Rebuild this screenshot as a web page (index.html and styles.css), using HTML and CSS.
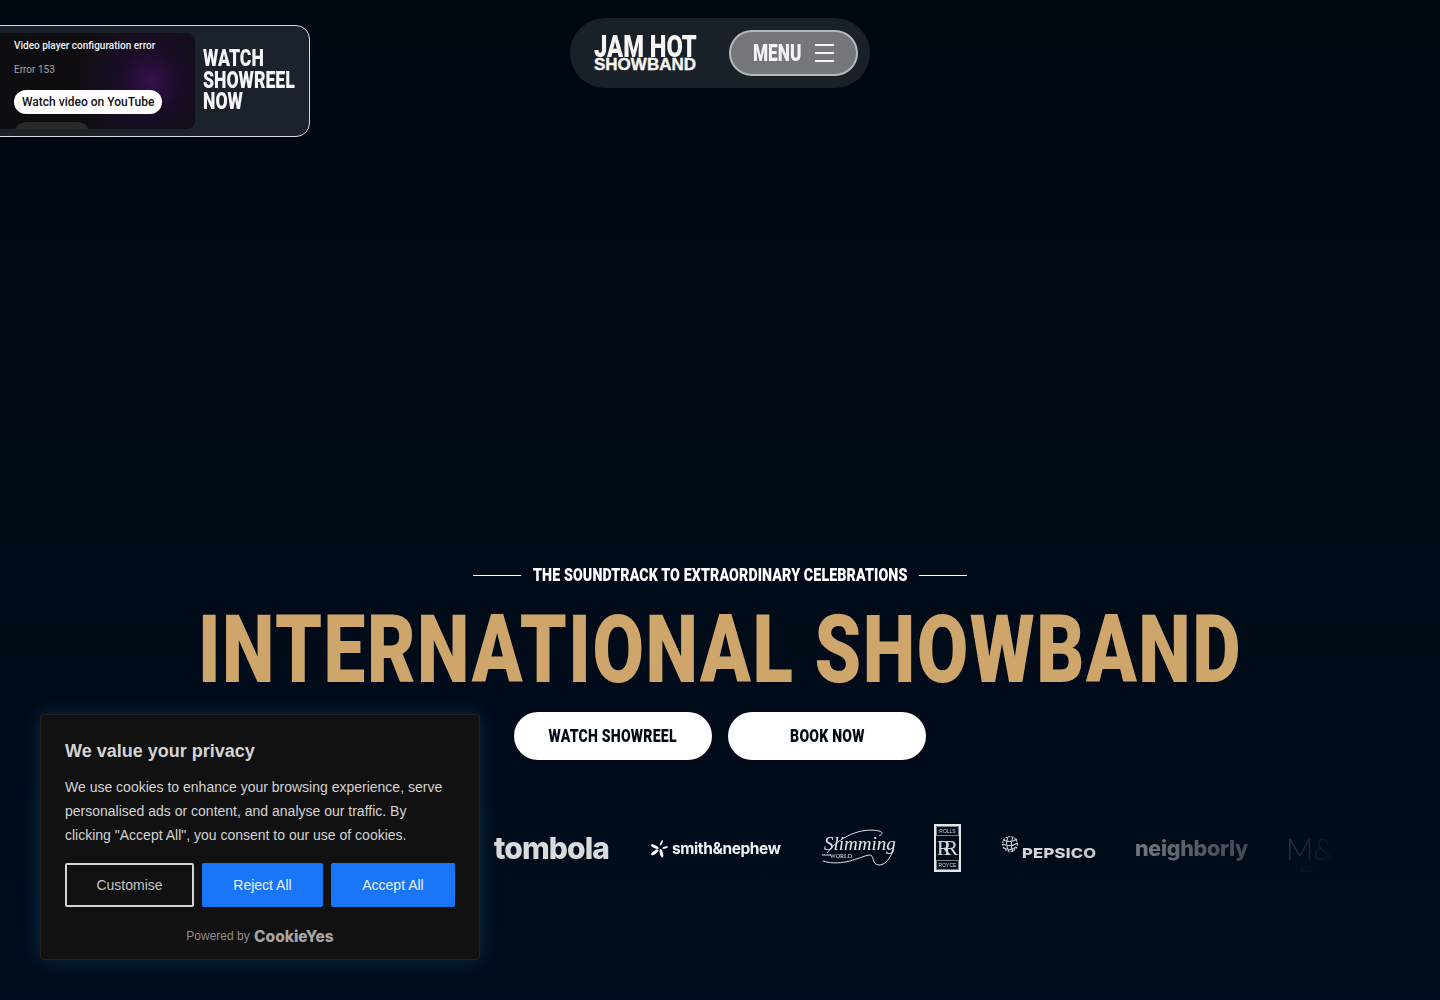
FILE: index.html
```html
<!DOCTYPE html>
<html lang="en">
<head>
  <meta charset="UTF-8">
  <title>Jam Hot Showband</title>
  <link rel="stylesheet" href="styles.css">
</head>
<body>

  <!-- Showreel popup -->
  <div class="reel-card">
    <div class="reel-video">
      <p class="reel-title">Video player configuration error</p>
      <p class="reel-code">Error 153</p>
      <span class="reel-link">Watch video on YouTube</span>
      <span class="reel-stub"></span>
    </div>
    <div class="reel-label">WATCH<br>SHOWREEL<br>NOW</div>
  </div>

  <header class="nav-wrap">
    <nav class="nav-pill">
      <div class="brand">
        <span class="brand-top">JAM HOT</span>
        <span class="brand-sub">SHOWBAND</span>
      </div>
      <button class="menu-btn">
        <span class="menu-text">MENU</span>
        <span class="burger"><i></i><i></i><i></i></span>
      </button>
    </nav>
  </header>

  <main class="hero">
    <div class="tagline">
      <span class="tagline-rule"></span>
      <span class="tagline-text">THE SOUNDTRACK TO EXTRAORDINARY CELEBRATIONS</span>
      <span class="tagline-rule"></span>
    </div>
    <h1 class="headline">INTERNATIONAL SHOWBAND</h1>
    <div class="cta-row">
      <a class="cta"><span>WATCH SHOWREEL</span></a>
      <a class="cta"><span>BOOK NOW</span></a>
    </div>
    <div class="logo-row">
      <span class="logo-tombola">tombola</span>
      <span class="logo-smith">
        <svg viewBox="0 0 20 20" width="19" height="19" fill="#fff">
          <ellipse cx="5" cy="8" rx="4.5" ry="1.6" transform="rotate(25 5 8)"/>
          <ellipse cx="5" cy="14" rx="4.5" ry="1.8" transform="rotate(-35 5 14)"/>
          <ellipse cx="12" cy="15" rx="1.6" ry="4.5" transform="rotate(-15 12 15)"/>
          <ellipse cx="16" cy="9" rx="3" ry="1.1" transform="rotate(-15 16 9)"/>
          <ellipse cx="12" cy="4" rx="1" ry="3" transform="rotate(25 12 4)"/>
        </svg>
        <span>smith&amp;nephew</span>
      </span>
      <span class="logo-slimming">
        <svg class="swoosh" viewBox="0 0 74 38" width="74" height="38" fill="none" stroke="#dfe3e6" stroke-width="1"><path d="M6 24C18 8 40 -2 58 2c4 1 4 3 0 5"/><path d="M1 26H10"/><path d="M2 32C22 38 38 28 48 26c6-1 2 10 10 10s12-10 14-14"/></svg>
        <span class="slimming-text">Slimming</span>
        <span class="slimming-sub">WORLD</span>
      </span>
      <span class="logo-rr">
        <span class="rr-small">ROLLS</span>
        <span class="rr-mark">RR</span>
        <span class="rr-small">ROYCE</span>
      </span>
      <span class="logo-pepsico">
        <svg viewBox="0 0 18 18" width="18" height="18" fill="none" stroke="#c9ccce" stroke-width="1.1"><circle cx="9" cy="9" r="7.4" stroke-dasharray="2 1"/><path d="M2 5c5 2 10 2 14-1M1.5 9c5 2 11 2 15-1M3 13c4 2 9 2 12-1M7 2c-2 4-2 10 1 14M12 2c-2 4-2 10 0 15"/></svg>
        <span>PEPSICO</span>
      </span>
      <span class="logo-neighborly">neighborly</span>
      <span class="logo-ms">M&amp;<small>EST</small></span>
    </div>
  </main>

  <!-- Cookie consent -->
  <aside class="cookie-box">
    <h2 class="cookie-title">We value your privacy</h2>
    <p class="cookie-text">We use cookies to enhance your browsing experience, serve personalised ads or content, and analyse our traffic. By clicking "Accept All", you consent to our use of cookies.</p>
    <div class="cookie-actions">
      <button class="cookie-btn cookie-outline">Customise</button>
      <button class="cookie-btn cookie-reject">Reject All</button>
      <button class="cookie-btn cookie-accept">Accept All</button>
    </div>
    <p class="cookie-powered">Powered by <b>CookieYes</b></p>
  </aside>

</body>
</html>
```

FILE: styles.css
```css
/* Global Styles */
body {
  margin: 0;
  height: 1000px;
  overflow: hidden;
  position: relative;
  background: linear-gradient(180deg, #01070f, #010a17 45%, #010d1c);
  color: #fff;
  font-family: 'Liberation Sans', sans-serif;
}

p, h1, h2 {
  margin: 0;
}

/* Showreel popup */
.reel-card {
  position: absolute;
  top: 25px;
  left: -1px;
  width: 311px;
  height: 112px;
  box-sizing: border-box;
  padding: 7px 0;
  display: flex;
  gap: 8px;
  background: #1b222b;
  border: 1px solid #d8dadc;
  border-radius: 0 14px 14px 0;
}

.reel-video {
  position: relative;
  width: 195px;
  flex: none;
  box-sizing: border-box;
  padding: 6px 0 0 14px;
  overflow: hidden;
  border-radius: 0 8px 8px 0;
  background: radial-gradient(circle at 150px 48px, #33104a 0, #1c0d29 30px, #0e0e10 75px);
  font-family: Roboto, sans-serif;
}

.reel-title {
  font-size: 10px;
  font-weight: 500;
  line-height: 14px;
  color: #f1f1f1;
}

.reel-code {
  margin-top: 10px;
  font-size: 10px;
  line-height: 14px;
  color: #a5a5a5;
}

.reel-link {
  display: inline-block;
  margin-top: 13px;
  padding: 0 8px;
  height: 24px;
  line-height: 24px;
  border-radius: 12px;
  background: #fff;
  color: #0f0f0f;
  font-size: 12px;
  font-weight: 500;
}

.reel-stub {
  position: absolute;
  left: 14px;
  top: 89px;
  width: 76px;
  height: 24px;
  border-radius: 12px;
  background: #2a2a2a;
}

.reel-label {
  margin-top: 15px;
  transform: scaleX(.735);
  transform-origin: left;
  font-family: Roboto, sans-serif;
  font-weight: 900;
  font-size: 24px;
  line-height: 21.5px;
  white-space: nowrap;
  color: #f4f5f6;
}

/* Nav */
.nav-wrap {
  position: absolute;
  top: 18px;
  left: 0;
  right: 0;
  display: flex;
  justify-content: center;
}

.nav-pill {
  width: 300px;
  height: 70px;
  box-sizing: border-box;
  padding: 12px 12px 0 24px;
  display: flex;
  justify-content: space-between;
  background: #1a2028;
  border-radius: 35px;
}

.brand {
  display: flex;
  flex-direction: column;
  width: 103px;
  padding-top: 4px;
  color: #f7f5f2;
  white-space: nowrap;
}

.brand-top {
  transform: scaleX(.74);
  transform-origin: left;
  font-family: Roboto, sans-serif;
  font-weight: 900;
  font-size: 32px;
  line-height: 24px;
}

.brand-sub {
  font-weight: 700;
  font-size: 17px;
  line-height: 13px;
  -webkit-text-stroke: .4px #f7f5f2;
}

.menu-btn {
  width: 129px;
  height: 46px;
  box-sizing: border-box;
  padding: 0 22px;
  display: flex;
  align-items: center;
  gap: 13px;
  background: #73777c;
  border: 2px solid #b6b9bc;
  border-radius: 23px;
  color: #f4f4f4;
}

.menu-text {
  width: 49px;
  flex: none;
  transform: scaleX(.75);
  transform-origin: left;
  font-family: Roboto, sans-serif;
  font-weight: 900;
  font-size: 23px;
  text-align: left;
}

.burger {
  display: flex;
  flex-direction: column;
  gap: 6.5px;
}

.burger i {
  display: block;
  width: 19px;
  height: 1.5px;
  background: #f4f4f4;
}

/* Hero */
.hero {
  height: 1000px;
  box-sizing: border-box;
  padding-top: 564px;
  display: flex;
  flex-direction: column;
  align-items: center;
}

.tagline {
  display: flex;
  align-items: center;
  gap: 12px;
  height: 22px;
}

.tagline-rule {
  width: 48px;
  height: 1px;
  background: #fff;
}

.tagline-text {
  width: 374px;
  transform: scaleX(.79);
  transform-origin: left;
  font-family: Roboto, sans-serif;
  font-weight: 900;
  font-size: 18px;
  line-height: 22px;
  letter-spacing: .14px;
  white-space: nowrap;
}

.headline {
  margin-top: 12px;
  height: 112px;
  transform: scaleX(.785);
  font-family: Roboto, sans-serif;
  font-weight: 900;
  font-size: 95px;
  line-height: 103px;
  letter-spacing: 2px;
  color: #cea66b;
  white-space: nowrap;
}

.cta-row {
  display: flex;
  gap: 16px;
  margin-top: 2px;
}

.cta {
  width: 198px;
  height: 48px;
  line-height: 48px;
  text-align: center;
  background: #fff;
  border-radius: 24px;
  color: #010a17;
  font-family: Roboto, sans-serif;
  font-weight: 900;
  font-size: 19px;
}

.cta span {
  display: inline-block;
  transform: scaleX(.74);
  letter-spacing: .3px;
  white-space: nowrap;
}

/* Client logos */
.logo-row {
  margin-top: 64px;
  width: 1240px;
  height: 48px;
  box-sizing: border-box;
  padding-left: 394px;
  display: flex;
  align-items: center;
  gap: 40px;
  white-space: nowrap;
  -webkit-mask-image: linear-gradient(90deg, #000 78%, rgba(0,0,0,.6) 88%, rgba(0,0,0,.3) 96%, transparent 100%);
  mask-image: linear-gradient(90deg, #000 78%, rgba(0,0,0,.6) 88%, rgba(0,0,0,.3) 96%, transparent 100%);
}

.logo-tombola {
  width: 116px;
  flex: none;
  font-family: Inter, sans-serif;
  font-weight: 800;
  font-size: 30px;
  letter-spacing: -.9px;
  color: #d8dadc;
}

.logo-smith {
  width: 131px;
  flex: none;
  display: flex;
  align-items: center;
  gap: 3px;
  font-family: Inter, sans-serif;
  font-weight: 700;
  font-size: 15.5px;
  letter-spacing: -.4px;
  color: #f1f2f3;
}

.logo-slimming {
  position: relative;
  width: 73px;
  height: 38px;
  flex: none;
  font-family: 'Liberation Serif', serif;
  font-style: italic;
  color: #e6e8ea;
}

.swoosh {
  position: absolute;
  left: 0;
  top: 0;
}

.slimming-text {
  position: absolute;
  left: 3px;
  top: 5px;
  font-size: 19px;
  line-height: 19px;
}

.slimming-sub {
  position: absolute;
  left: 9px;
  top: 24px;
  font-size: 6px;
  line-height: 6px;
  font-style: normal;
}

.logo-rr {
  width: 27px;
  height: 48px;
  flex: none;
  box-sizing: border-box;
  display: flex;
  flex-direction: column;
  align-items: center;
  justify-content: space-between;
  padding: 1px;
  border: 2px solid #e3e5e7;
  color: #d5d8da;
}

.rr-small {
  width: 100%;
  text-align: center;
  font-size: 5px;
  line-height: 8px;
  overflow: hidden;
  outline: 1px solid #7d8083;
}

.rr-mark {
  font-family: 'Liberation Serif', serif;
  font-size: 22px;
  line-height: 24px;
  letter-spacing: -8px;
  padding-right: 8px;
}

.logo-pepsico {
  width: 94px;
  flex: none;
  display: flex;
  gap: 3px;
  color: #d4d6d8;
  font-family: Inter, sans-serif;
  font-weight: 800;
  font-size: 13.5px;
  letter-spacing: .2px;
}

.logo-pepsico svg {
  margin-top: -1px;
}

.logo-pepsico span {
  padding-top: 9px;
  transform: scaleX(1.23);
  transform-origin: left;
}

.logo-neighborly {
  width: 115px;
  flex: none;
  font-family: Inter, sans-serif;
  font-weight: 800;
  font-size: 21.5px;
  letter-spacing: -.3px;
  color: #95989c;
}

.logo-ms {
  position: relative;
  margin-left: -4px;
  font-family: Lato, sans-serif;
  font-weight: 300;
  font-size: 30px;
  line-height: 34px;
  color: #8a8f95;
}

.logo-ms small {
  position: absolute;
  left: 15px;
  top: 34px;
  font-size: 7px;
  line-height: 8px;
}

/* Cookie consent */
.cookie-box {
  position: absolute;
  left: 40px;
  top: 714px;
  width: 440px;
  height: 246px;
  box-sizing: border-box;
  padding: 24px 24px 0;
  background: #111;
  border: 1px solid #222;
  border-radius: 4px;
  box-shadow: 0 0 18px rgba(40, 130, 200, .28);
  color: #d4d4d4;
}

.cookie-title {
  font-size: 18px;
  line-height: 24px;
  font-weight: 700;
}

.cookie-text {
  margin-top: 12px;
  font-size: 14px;
  line-height: 24px;
}

.cookie-actions {
  display: flex;
  gap: 8px;
  margin-top: 16px;
}

.cookie-btn {
  height: 44px;
  border: 2px solid #1a76f8;
  border-radius: 2px;
  background: #1a76f8;
  color: #e8f0fc;
  font-family: inherit;
  font-size: 14px;
}

.cookie-outline {
  width: 129px;
  border-color: #d4d4d4;
  background: transparent;
  color: #c4c4c4;
}

.cookie-reject {
  width: 121px;
}

.cookie-accept {
  width: 124px;
}

.cookie-powered {
  margin-top: 20px;
  text-align: center;
  font-size: 12px;
  line-height: 18px;
  color: #8f8f8f;
}

.cookie-powered b {
  margin-left: 1px;
  font-family: Inter, sans-serif;
  font-size: 15.5px;
  font-weight: 800;
  vertical-align: -2px;
  color: #a6a6a6;
}
```
